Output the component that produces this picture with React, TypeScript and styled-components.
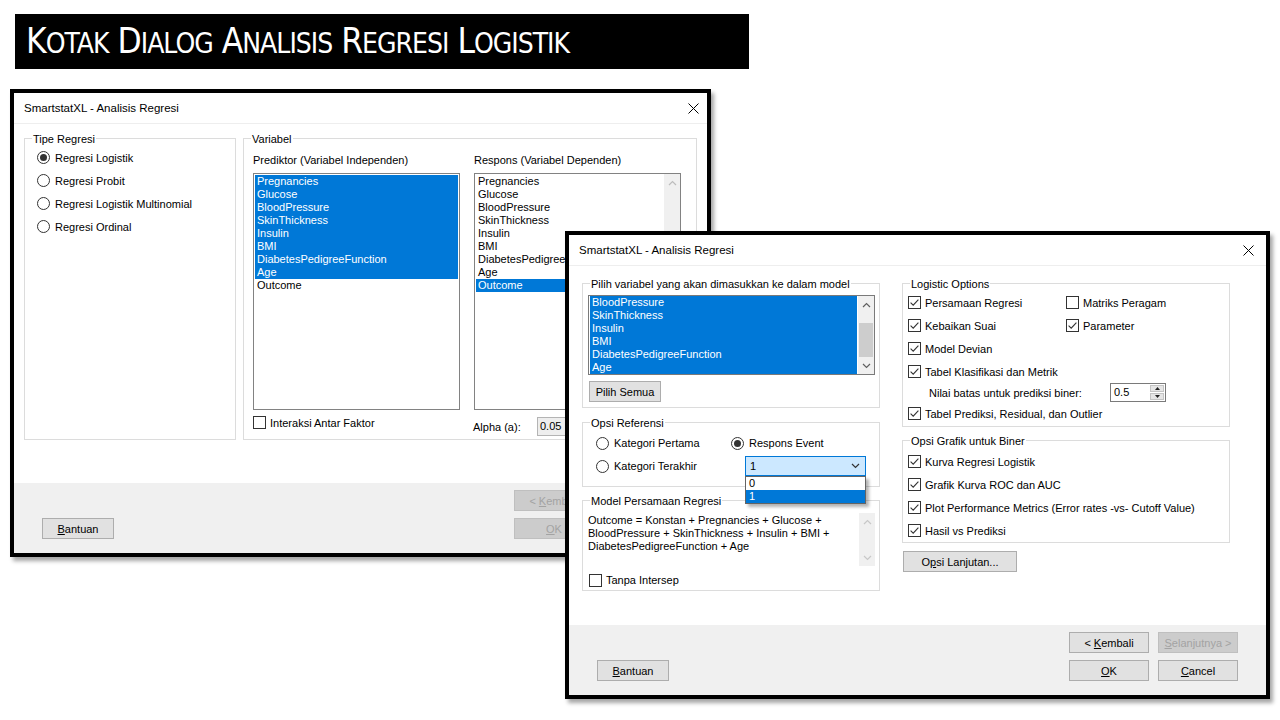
import React from 'react';
import styled, { createGlobalStyle } from 'styled-components';

const GlobalStyle = createGlobalStyle`
  html, body {
    margin: 0;
    padding: 0;
    background: #fff;
  }
  body {
    font-family: "Liberation Sans", Arial, sans-serif;
    font-size: 11px;
    color: #000;
  }
  * {
    box-sizing: border-box;
  }
`;

const variables = [
  'Pregnancies',
  'Glucose',
  'BloodPressure',
  'SkinThickness',
  'Insulin',
  'BMI',
  'DiabetesPedigreeFunction',
  'Age',
  'Outcome'
];

const titleWords = ['Kotak', 'Dialog', 'Analisis', 'Regresi', 'Logistik'];

// Small drawings: chevrons, check mark, close cross
const ChevronUp = ({ color = '#606060' }: { color?: string }) => (
  <svg width="9" height="6" viewBox="0 0 9 6">
    <polyline points="1,5 4.5,1.5 8,5" fill="none" stroke={color} strokeWidth="1.2" />
  </svg>
);

const ChevronDown = ({ color = '#606060' }: { color?: string }) => (
  <svg width="9" height="6" viewBox="0 0 9 6">
    <polyline points="1,1 4.5,4.5 8,1" fill="none" stroke={color} strokeWidth="1.2" />
  </svg>
);

const CheckMark = () => (
  <svg width="11" height="11" viewBox="0 0 11 11">
    <polyline points="1.6,5.6 4.2,8.2 9.4,2.6" fill="none" stroke="#333" strokeWidth="1.1" />
  </svg>
);

const CloseCross = () => (
  <svg width="11" height="11" viewBox="0 0 11 11">
    <line x1="0.5" y1="0.5" x2="10.5" y2="10.5" stroke="#000" strokeWidth="1" />
    <line x1="10.5" y1="0.5" x2="0.5" y2="10.5" stroke="#000" strokeWidth="1" />
  </svg>
);

const Triangle = ({ up }: { up?: boolean }) => (
  <svg width="5" height="3" viewBox="0 0 5 3">
    <polygon points={up ? '0,3 2.5,0 5,3' : '0,0 2.5,3 5,0'} fill="#222" />
  </svg>
);

const CheckOption = ({ label, checked, h }: { label: string; checked?: boolean; h?: number }) => (
  <OptionRow $h={h} $gap={4}>
    <CheckBox>{checked && <CheckMark />}</CheckBox>
    <span>{label}</span>
  </OptionRow>
);

const RadioOption = ({ label, on, h }: { label: string; on?: boolean; h?: number }) => (
  <OptionRow $h={h} $gap={5}>
    <RadioCircle>{on && <RadioDot />}</RadioCircle>
    <span>{label}</span>
  </OptionRow>
);

// step 1 sits behind step 2, so its right-hand column is covered and left empty
const FooterButtons = ({ step }: { step: 1 | 2 }) => (
  <ButtonGrid>
    <Button $w={80} disabled={step === 1}>
      &lt; <u>K</u>embali
    </Button>
    {step === 2 ? (
      <Button $w={80} disabled>
        <u>S</u>elanjutnya &gt;
      </Button>
    ) : (
      <span />
    )}
    <Button $w={80} disabled={step === 1}>
      <u>O</u>K
    </Button>
    {step === 2 ? (
      <Button $w={80}>
        <u>C</u>ancel
      </Button>
    ) : (
      <span />
    )}
  </ButtonGrid>
);

const App: React.FC = () => {
  return (
    <>
      <GlobalStyle />
      <Stage>
        <Banner>
          <BannerTitle>
            {titleWords.map((word, i) => (
              <React.Fragment key={word}>
                {i > 0 && ' '}
                {word[0]}
                <SmallCaps>{word.slice(1)}</SmallCaps>
              </React.Fragment>
            ))}
          </BannerTitle>
        </Banner>

        {/* Step 1 window */}
        <Window $left={10} $top={89} $width={701}>
          <TitleBar $closePad={8}>
            <TitleText>SmartstatXL - Analisis Regresi</TitleText>
            <CloseCross />
          </TitleBar>
          <StepOneBody>
            <Group $w={212} $h={302}>
              <Legend>Tipe Regresi</Legend>
              <GroupInner $pad="0 0 0 12px">
                <RadioOption label="Regresi Logistik" on />
                <RadioOption label="Regresi Probit" />
                <RadioOption label="Regresi Logistik Multinomial" />
                <RadioOption label="Regresi Ordinal" />
              </GroupInner>
            </Group>
            <Group $h={302} $grow>
              <Legend>Variabel</Legend>
              <VarColumns>
                <VarColumn>
                  <FieldLabel>Prediktor (Variabel Independen)</FieldLabel>
                  <ListBox $h={237}>
                    <ListItems>
                      {variables.map((v, i) => (
                        <ListItem key={v} $sel={i < 8}>
                          {v}
                        </ListItem>
                      ))}
                    </ListItems>
                  </ListBox>
                  <BottomRow>
                    <CheckOption label="Interaksi Antar Faktor" h={17} />
                  </BottomRow>
                </VarColumn>
                <VarColumn>
                  <FieldLabel>Respons (Variabel Dependen)</FieldLabel>
                  <ListBox $h={237}>
                    <ListItems>
                      {variables.map(v => (
                        <ListItem key={v} $sel={v === 'Outcome'}>
                          {v}
                        </ListItem>
                      ))}
                    </ListItems>
                    <ScrollTrack>
                      <ScrollArrow>
                        <ChevronUp color="#bdbdbd" />
                      </ScrollArrow>
                      <ScrollArrow $bottom>
                        <ChevronDown color="#bdbdbd" />
                      </ScrollArrow>
                    </ScrollTrack>
                  </ListBox>
                  <AlphaRow>
                    <AlphaLabel>Alpha (a):</AlphaLabel>
                    <AlphaInput>0.05</AlphaInput>
                  </AlphaRow>
                </VarColumn>
              </VarColumns>
            </Group>
          </StepOneBody>
          <Footer $padRight={24}>
            <Button $w={72}>
              <u>B</u>antuan
            </Button>
            <FooterButtons step={1} />
          </Footer>
        </Window>

        {/* Step 2 window */}
        <Window $left={565} $top={231} $width={705}>
          <TitleBar $closePad={12}>
            <TitleText>SmartstatXL - Analisis Regresi</TitleText>
            <CloseCross />
          </TitleBar>
          <StepTwoBody>
            <Column $gaps={[14, 13]}>
              <Group $w={298} $h={125}>
                <Legend>Pilih variabel yang akan dimasukkan ke dalam model</Legend>
                <GroupInner $pad="4px 4px 0 5px">
                  <ListBox $h={80} $border="#7a7a7a">
                    <ListItems $padTop={0}>
                      {variables.slice(2, 8).map(v => (
                        <ListItem key={v} $sel>
                          {v}
                        </ListItem>
                      ))}
                    </ListItems>
                    <ScrollTrack>
                      <ScrollArrow>
                        <ChevronUp />
                      </ScrollArrow>
                      <ScrollThumb />
                      <ScrollArrow $bottom>
                        <ChevronDown />
                      </ScrollArrow>
                    </ScrollTrack>
                  </ListBox>
                  <Button $w={72} $mt={6} $ml={1}>
                    Pilih Semua
                  </Button>
                </GroupInner>
              </Group>

              <Group $w={298} $h={65}>
                <Legend>Opsi Referensi</Legend>
                <RefGrid>
                  <RadioOption label="Kategori Pertama" h={20} />
                  <RadioOption label="Respons Event" on h={20} />
                  <RadioOption label="Kategori Terakhir" h={20} />
                  <Combo>
                    <span>1</span>
                    <ChevronDown color="#333" />
                    <DropList>
                      <DropItem>0</DropItem>
                      <DropItem $sel>1</DropItem>
                    </DropList>
                  </Combo>
                </RefGrid>
              </Group>

              <Group $w={298} $h={91}>
                <Legend>Model Persamaan Regresi</Legend>
                <GroupInner $pad="5px 5px 0 4px">
                  <ModelBox>
                    <ModelText>
                      Outcome = Konstan + Pregnancies + Glucose +
                      <br />
                      BloodPressure + SkinThickness + Insulin + BMI +
                      <br />
                      DiabetesPedigreeFunction + Age
                    </ModelText>
                    <ScrollTrack $pale>
                      <ScrollArrow>
                        <ChevronUp color="#c8c8c8" />
                      </ScrollArrow>
                      <ScrollArrow $bottom>
                        <ChevronDown color="#c8c8c8" />
                      </ScrollArrow>
                    </ScrollTrack>
                  </ModelBox>
                  <Indent $l={2} $t={5}>
                    <CheckOption label="Tanpa Intersep" h={18} />
                  </Indent>
                </GroupInner>
              </Group>
            </Column>

            <Column $gaps={[13, 8]}>
              <Group $w={328} $h={144}>
                <Legend>Logistic Options</Legend>
                <GroupInner $pad="0 0 0 5px">
                  <OptGrid>
                    <CheckOption label="Persamaan Regresi" checked />
                    <CheckOption label="Matriks Peragam" />
                    <CheckOption label="Kebaikan Suai" checked />
                    <CheckOption label="Parameter" checked />
                  </OptGrid>
                  <CheckOption label="Model Devian" checked />
                  <CheckOption label="Tabel Klasifikasi dan Metrik" checked />
                  <ThresholdRow>
                    <ThresholdLabel>Nilai batas untuk prediksi biner:</ThresholdLabel>
                    <Spin>
                      <SpinValue>0.5</SpinValue>
                      <SpinButtons>
                        <SpinHalf>
                          <Triangle up />
                        </SpinHalf>
                        <SpinHalf>
                          <Triangle />
                        </SpinHalf>
                      </SpinButtons>
                    </Spin>
                  </ThresholdRow>
                  <CheckOption label="Tabel Prediksi, Residual, dan Outlier" checked />
                </GroupInner>
              </Group>

              <Group $w={328} $h={103}>
                <Legend>Opsi Grafik untuk Biner</Legend>
                <GroupInner $pad="2px 0 0 5px">
                  <CheckOption label="Kurva Regresi Logistik" checked />
                  <CheckOption label="Grafik Kurva ROC dan AUC" checked />
                  <CheckOption label="Plot Performance Metrics (Error rates -vs- Cutoff Value)" checked />
                  <CheckOption label="Hasil vs Prediksi" checked />
                </GroupInner>
              </Group>

              <Button $w={114} $ml={1}>
                O<u>p</u>si Lanjutan...
              </Button>
            </Column>
          </StepTwoBody>
          <Footer $padRight={28}>
            <Button $w={72}>
              <u>B</u>antuan
            </Button>
            <FooterButtons step={2} />
          </Footer>
        </Window>
      </Stage>
    </>
  );
};

const Stage = styled.div`
  position: relative;
  width: 1280px;
  height: 720px;
  overflow: hidden;
  background: #fff;
`;

const Banner = styled.header`
  width: 734px;
  height: 55px;
  margin: 14px 0 0 15px;
  padding-left: 11px;
  background: #000;
  display: flex;
  align-items: center;
`;

const BannerTitle = styled.h1`
  margin: 0;
  font-family: "Liberation Sans Narrow", "DejaVu Sans Condensed", "Liberation Sans", sans-serif;
  font-weight: 400;
  font-size: 35px;
  line-height: 1;
  letter-spacing: -1px;
  color: #fff;
  white-space: nowrap;
`;

const SmallCaps = styled.span`
  font-size: 28px;
  text-transform: uppercase;
`;

const Window = styled.section<{ $left: number; $top: number; $width: number }>`
  position: absolute;
  left: ${({ $left }) => $left}px;
  top: ${({ $top }) => $top}px;
  width: ${({ $width }) => $width}px;
  height: 468px;
  border: 4px solid #000;
  background: #fff;
  display: flex;
  flex-direction: column;
  box-shadow: 3px 4px 4px rgba(0, 0, 0, 0.35);
`;

const TitleBar = styled.div<{ $closePad: number }>`
  height: 31px;
  flex: none;
  display: flex;
  align-items: center;
  justify-content: space-between;
  padding: 0 ${({ $closePad }) => $closePad}px 0 10px;
  border-bottom: 1px solid #eeeeee;
`;

const TitleText = styled.span`
  font-size: 11.5px;
`;

const StepOneBody = styled.div`
  flex: 1;
  display: flex;
  align-items: flex-start;
  gap: 7px;
  padding: 14px 10px 0 10px;
`;

const StepTwoBody = styled.div`
  flex: 1;
  display: grid;
  grid-template-columns: 298px 328px;
  column-gap: 22px;
  align-items: start;
  padding: 17px 0 0 13px;
`;

const Column = styled.div<{ $gaps: number[] }>`
  display: flex;
  flex-direction: column;

  & > *:nth-child(2) {
    margin-top: ${({ $gaps }) => $gaps[0]}px;
  }
  & > *:nth-child(3) {
    margin-top: ${({ $gaps }) => $gaps[1]}px;
  }
`;

const Group = styled.div<{ $w?: number; $h: number; $grow?: boolean }>`
  width: ${({ $w }) => ($w ? `${$w}px` : 'auto')};
  flex: ${({ $grow }) => ($grow ? 1 : 'none')};
  height: ${({ $h }) => $h}px;
  border: 1px solid #dcdcdc;
`;

const Legend = styled.div`
  width: fit-content;
  height: 14px;
  line-height: 14px;
  margin: -7px 0 0 7px;
  padding: 0 1px;
  background: #fff;
  white-space: nowrap;
`;

const GroupInner = styled.div<{ $pad: string }>`
  padding: ${({ $pad }) => $pad};
`;

const OptionRow = styled.div<{ $h?: number; $gap: number }>`
  display: flex;
  align-items: center;
  gap: ${({ $gap }) => $gap}px;
  height: ${({ $h }) => $h ?? 23}px;
  white-space: nowrap;
`;

const RadioCircle = styled.span`
  width: 13px;
  height: 13px;
  flex: none;
  border: 1px solid #333;
  border-radius: 50%;
  background: #fff;
  display: flex;
  align-items: center;
  justify-content: center;
`;

const RadioDot = styled.span`
  width: 7px;
  height: 7px;
  border-radius: 50%;
  background: #333;
`;

const CheckBox = styled.span`
  width: 13px;
  height: 13px;
  flex: none;
  border: 1px solid #333;
  background: #fff;
  display: flex;
  align-items: center;
  justify-content: center;
`;

const VarColumns = styled.div`
  display: flex;
  gap: 14px;
  padding-left: 9px;
`;

const VarColumn = styled.div`
  width: 207px;
  display: flex;
  flex-direction: column;
`;

const FieldLabel = styled.div`
  height: 14px;
  line-height: 14px;
  margin-top: 7px;
  white-space: nowrap;
`;

const ListBox = styled.div<{ $h: number; $border?: string }>`
  display: flex;
  height: ${({ $h }) => $h}px;
  margin-top: 6px;
  border: 1px solid ${({ $border }) => $border ?? '#828282'};
  background: #fff;
  overflow: hidden;

  ${GroupInner} > & {
    margin-top: 0;
  }
`;

const ListItems = styled.div<{ $padTop?: number }>`
  flex: 1;
  min-width: 0;
  padding: ${({ $padTop }) => $padTop ?? 1}px 1px 1px 1px;
`;

const ListItem = styled.div<{ $sel?: boolean }>`
  height: 13px;
  line-height: 13px;
  padding-left: 2px;
  white-space: nowrap;
  overflow: hidden;
  background: ${({ $sel }) => ($sel ? '#0078d7' : 'transparent')};
  color: ${({ $sel }) => ($sel ? '#fff' : '#000')};
`;

const ScrollTrack = styled.div<{ $pale?: boolean }>`
  width: 16px;
  flex: none;
  background: ${({ $pale }) => ($pale ? '#f0f0f0' : '#f0f0f0')};
  display: flex;
  flex-direction: column;
`;

const ScrollArrow = styled.div<{ $bottom?: boolean }>`
  height: 17px;
  flex: none;
  margin-top: ${({ $bottom }) => ($bottom ? 'auto' : '0')};
  display: flex;
  align-items: center;
  justify-content: center;
`;

const ScrollThumb = styled.div`
  height: 34px;
  margin: 10px 1px 0 1px;
  background: #cdcdcd;
`;

const BottomRow = styled.div`
  margin-top: 4px;
`;

const AlphaRow = styled.div`
  display: flex;
  align-items: center;
  height: 19px;
  margin-top: 7px;
`;

const AlphaLabel = styled.span`
  width: 64px;
  margin-left: -1px;
  margin-top: 1px;
`;

const AlphaInput = styled.div`
  width: 64px;
  height: 19px;
  line-height: 17px;
  padding-left: 2px;
  border: 1px solid #b4b4b4;
  background: #eeeeee;
`;

const Footer = styled.div<{ $padRight: number }>`
  height: 70px;
  flex: none;
  margin-top: auto;
  background: #f0f0f0;
  display: flex;
  justify-content: space-between;
  align-items: flex-end;
  padding: 7px ${({ $padRight }) => $padRight}px 14px 28px;
`;

const ButtonGrid = styled.div`
  display: grid;
  grid-template-columns: 80px 80px;
  column-gap: 9px;
  row-gap: 7px;
`;

const Button = styled.button<{ $w: number; $mt?: number; $ml?: number }>`
  width: ${({ $w }) => $w}px;
  height: 21px;
  margin: ${({ $mt }) => $mt ?? 0}px 0 0 ${({ $ml }) => $ml ?? 0}px;
  padding: 0;
  font-family: "Liberation Sans", Arial, sans-serif;
  font-size: 11px;
  color: #000;
  background: #e1e1e1;
  border: 1px solid #adadad;
  white-space: nowrap;

  &:disabled {
    background: #cccccc;
    border-color: #bfbfbf;
    color: #a3a3a3;
  }
`;

const RefGrid = styled.div`
  display: grid;
  grid-template-columns: 135px 1fr;
  row-gap: 3px;
  padding: 3px 0 0 13px;
`;

const Combo = styled.div`
  position: relative;
  width: 121px;
  height: 20px;
  margin-left: 14px;
  border: 1px solid #0078d7;
  background: #cce8ff;
  display: flex;
  align-items: center;
  justify-content: space-between;
  padding: 0 5px 0 4px;
`;

const DropList = styled.div`
  position: absolute;
  top: calc(100% + 1px);
  left: -1px;
  width: calc(100% + 2px);
  border: 1px solid #646464;
  background: #fff;
  box-shadow: 3px 3px 3px rgba(0, 0, 0, 0.3);
  z-index: 2;
`;

const DropItem = styled.div<{ $sel?: boolean }>`
  height: 13px;
  line-height: 13px;
  padding-left: 3px;
  background: ${({ $sel }) => ($sel ? '#0078d7' : '#fff')};
  color: ${({ $sel }) => ($sel ? '#fff' : '#000')};
`;

const ModelBox = styled.div`
  display: flex;
  width: 288px;
  height: 53px;
`;

const ModelText = styled.div`
  flex: 1;
  padding: 1px 0 0 1px;
  line-height: 13px;
  white-space: nowrap;
`;

const Indent = styled.div<{ $l: number; $t: number }>`
  margin: ${({ $t }) => $t}px 0 0 ${({ $l }) => $l}px;
`;

const OptGrid = styled.div`
  display: grid;
  grid-template-columns: 158px 1fr;
`;

const ThresholdRow = styled.div`
  display: flex;
  align-items: center;
  height: 19px;
  padding-left: 21px;
`;

const ThresholdLabel = styled.span`
  width: 181px;
  white-space: nowrap;
`;

const Spin = styled.div`
  width: 56px;
  height: 19px;
  border: 1px solid #7a7a7a;
  background: #fff;
  display: flex;
`;

const SpinValue = styled.span`
  flex: 1;
  line-height: 17px;
  padding-left: 3px;
`;

const SpinButtons = styled.div`
  width: 14px;
  margin: 1px 1px 1px 0;
  display: flex;
  flex-direction: column;
  gap: 1px;
`;

const SpinHalf = styled.div`
  flex: 1;
  background: #e5e5e5;
  border: 1px solid #c4c4c4;
  display: flex;
  align-items: center;
  justify-content: center;
`;

export default App;
